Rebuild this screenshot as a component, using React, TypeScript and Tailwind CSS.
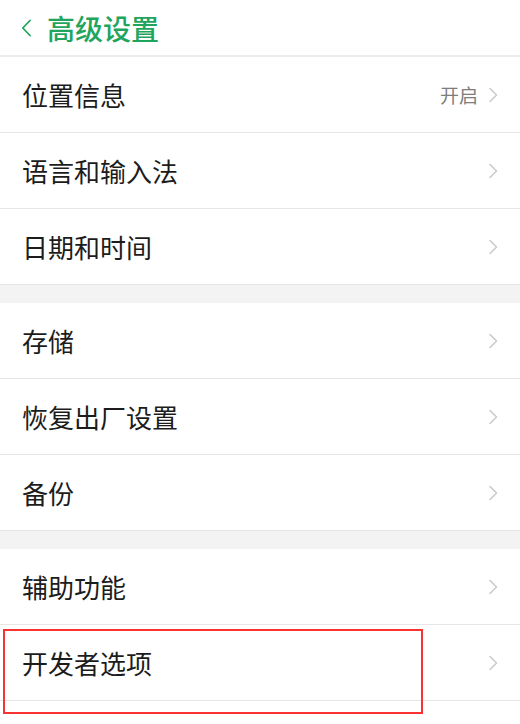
import { ReactNode } from "react";

type Item = { label: string; value?: string };

const GROUPS: Item[][] = [
  [{ label: "位置信息", value: "开启" }, { label: "语言和输入法" }, { label: "日期和时间" }],
  [{ label: "存储" }, { label: "恢复出厂设置" }, { label: "备份" }],
  [{ label: "辅助功能" }, { label: "开发者选项" }],
];

function Chevron() {
  return (
    <svg width="10" height="16" viewBox="0 0 10 16" fill="none" className="shrink-0">
      <path d="M2 1.5 L8.5 8 L2 14.5" stroke="#c9c9c9" strokeWidth="1.5" strokeLinecap="round" strokeLinejoin="round" />
    </svg>
  );
}

function Row({ item, highlight }: { item: Item; highlight?: boolean }): ReactNode {
  return (
    <div className="relative flex h-[76px] items-center border-b border-[#e6e6e6] pl-[22px] pr-[22px]">
      <span className="flex-1 text-[26px] leading-none text-[#1c1c1c]">{item.label}</span>
      {item.value && <span className="mr-[10px] text-[19px] leading-none text-[#7d7d7d]">{item.value}</span>}
      <Chevron />
      {highlight && (
        <div className="absolute left-[3px] top-[4px] h-[85px] w-[420px] border-2 border-[#fa3232]" />
      )}
    </div>
  );
}

export default function App() {
  return (
    <div
      className="min-h-[724px] w-[520px] bg-white"
      style={{ fontFamily: '"Noto Sans CJK SC", "Noto Sans", sans-serif' }}
    >
      <header className="flex h-[57px] items-center border-b-2 border-[#ececec] pl-[21px]">
        <svg width="11" height="18" viewBox="0 0 11 18" fill="none">
          <path d="M9 1.5 L1.8 9 L9 16.5" stroke="#1fa55d" strokeWidth="1.8" strokeLinecap="round" strokeLinejoin="round" />
        </svg>
        <h1 className="ml-[15px] text-[28px] font-medium leading-none text-[#1fa55d]">高级设置</h1>
      </header>
      {GROUPS.map((group, gi) => (
        <div key={gi}>
          {gi > 0 && <div className="h-[18px] bg-[#f3f3f3]" />}
          {group.map((item) => (
            <Row key={item.label} item={item} highlight={item.label === "开发者选项"} />
          ))}
        </div>
      ))}
    </div>
  );
}
